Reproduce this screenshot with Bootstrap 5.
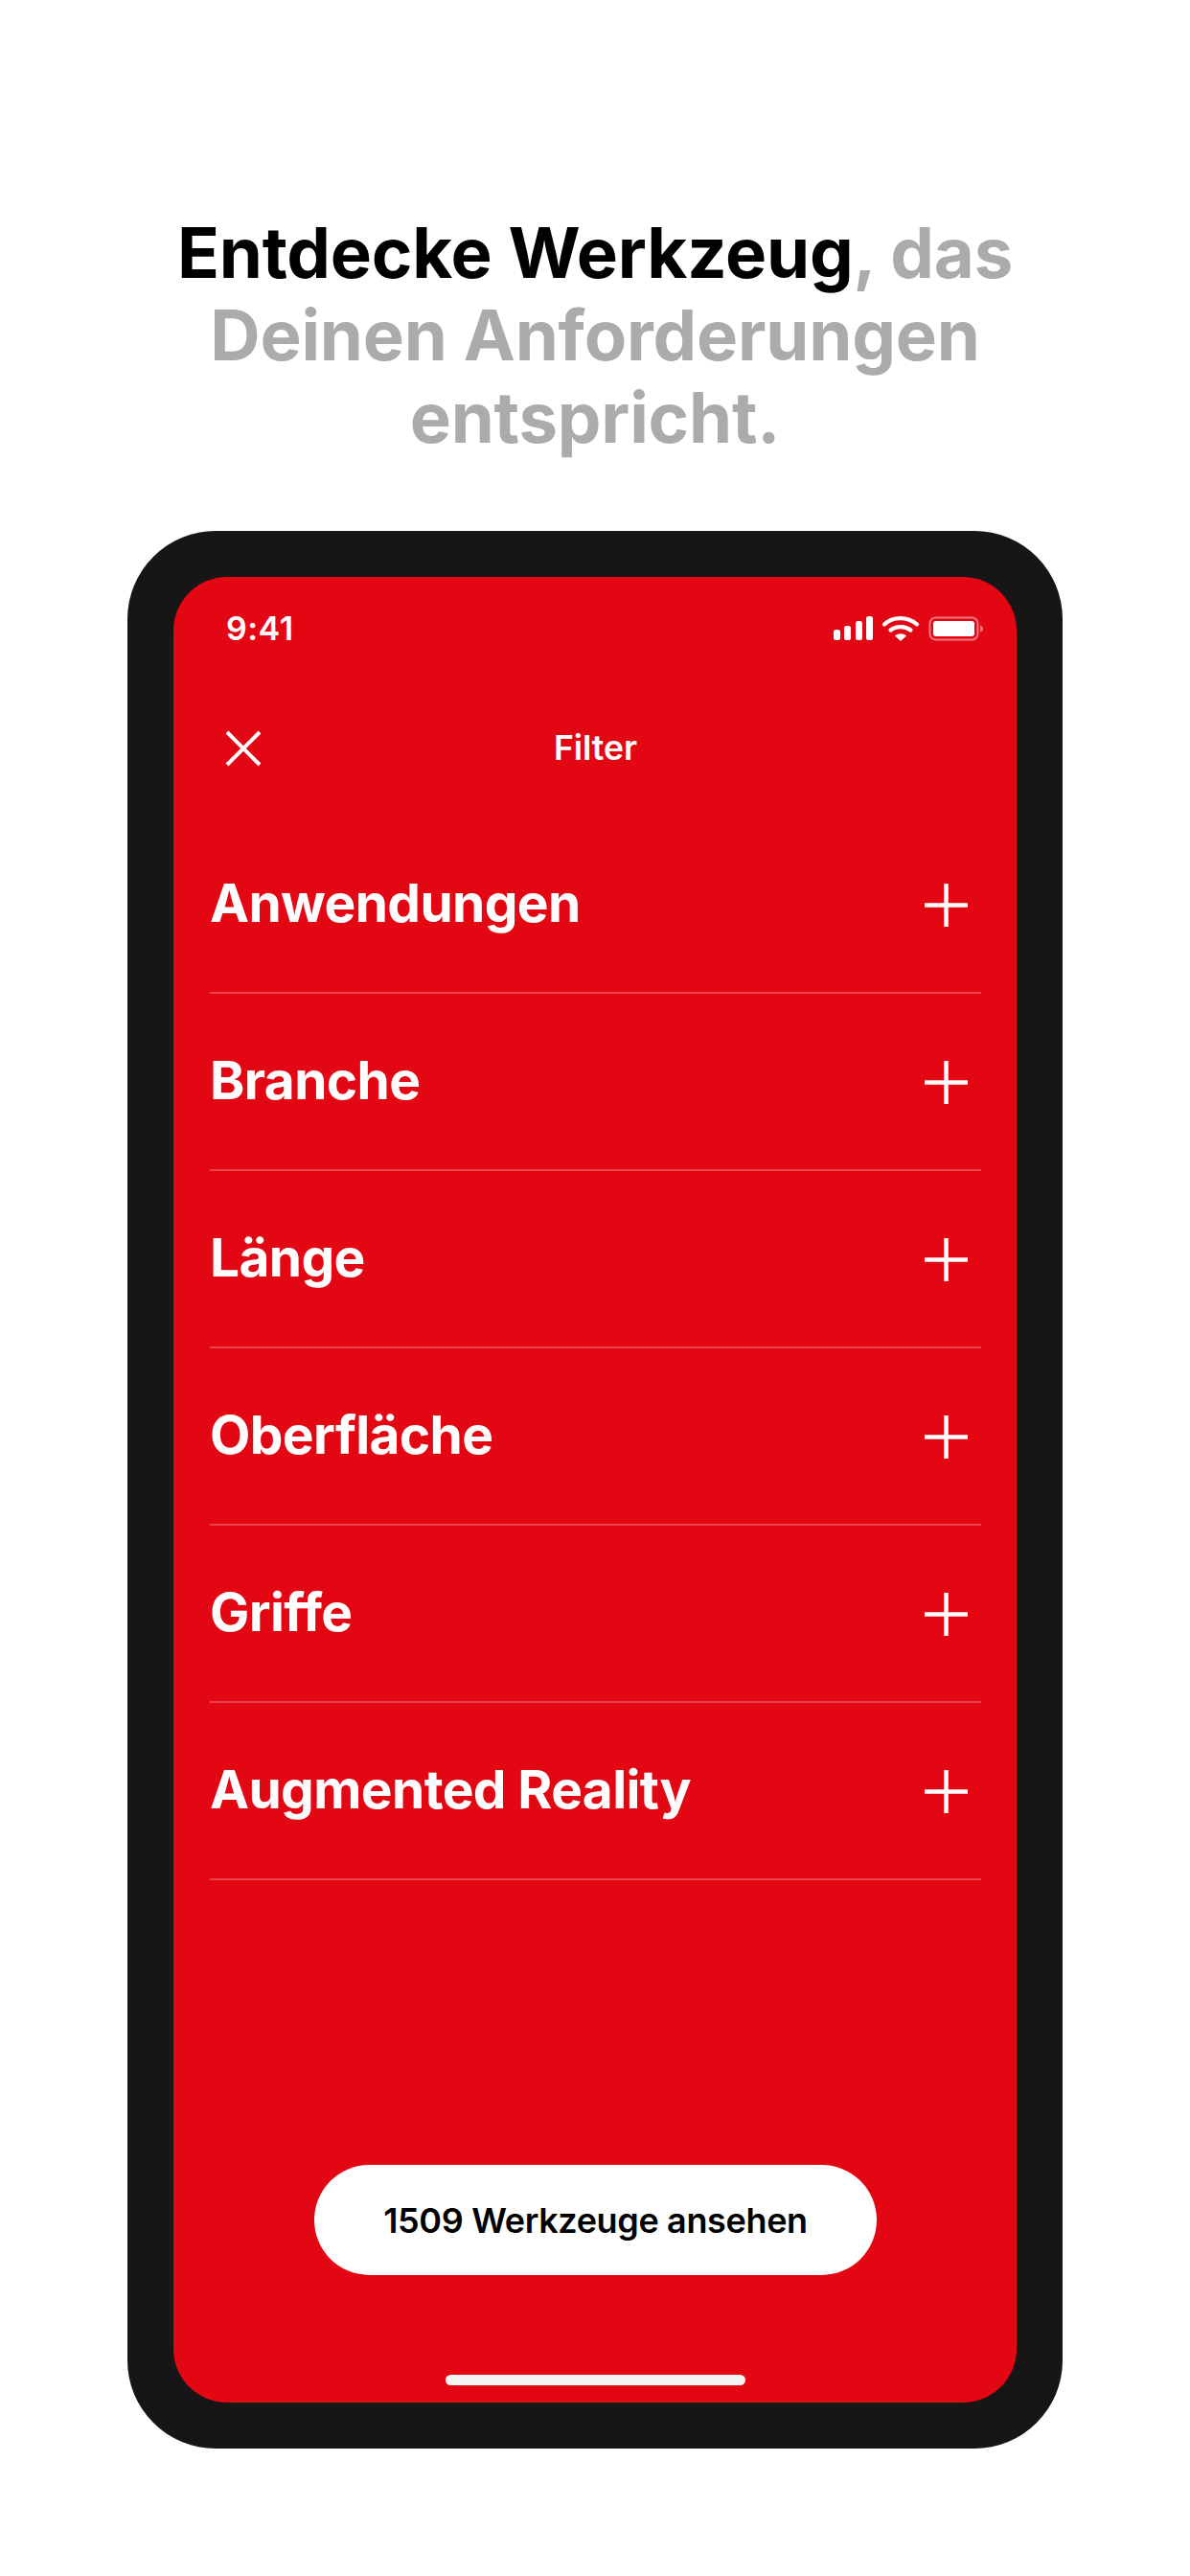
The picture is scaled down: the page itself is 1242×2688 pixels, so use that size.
<!DOCTYPE html>
<html lang="de">
<head>
  <meta charset="UTF-8">
  <title>Filter</title>
  <meta name="viewport" content="width=device-width, initial-scale=1">
  <link href="https://cdn.jsdelivr.net/npm/bootstrap@5.3.0/dist/css/bootstrap.min.css" rel="stylesheet">
  <style>
    body { background-color: #fff; font-family: Inter, "Liberation Sans", sans-serif; }
    .page-wrap { width: 1242px; height: 2688px; padding-top: 221px; }
    .promo-title {
      font-family: Inter, "Liberation Sans", sans-serif;
      font-size: 72.5px; line-height: 86px; font-weight: 700;
      color: #ababab; text-align: center; margin: 0 0 75px; letter-spacing: -.2px;
    }
    .promo-title b { color: #000; font-weight: 700; }
    .phone-frame { width: 976px; height: 2001px; margin: 0 auto; padding: 48px; background: #161616; border-radius: 92px; }
    .phone-screen { height: 100%; background: #e30613; border-radius: 56px; color: #fff; padding: 0 37px 18px 38px; }
    .status-row { height: 58px; margin: 25px -3px 0 0; padding: 0 0 0 17px; }
    .status-time { font-size: 34px; font-weight: 600; line-height: 58px; letter-spacing: .5px; }
    .top-row { height: 70px; margin-top: 61px; position: relative; }
    .top-title { font-size: 35.5px; font-weight: 600; }
    .close-btn { position: absolute; left: 16px; top: 16px; line-height: 0; }
    .filter-list { margin-top: 36px; }
    .filter-row { height: 185px; padding: 2px 14px 0 0; border-bottom: 2px solid rgba(255,255,255,.25); }
    .filter-name { font-size: 55px; font-weight: 650; letter-spacing: -.6px; line-height: 1; margin-top: -5px; }
    .see-btn {
      width: 587px; height: 115px; border-radius: 58px; background: #fff; color: #000; border: 0;
      font-size: 36px; font-weight: 600; letter-spacing: -.35px; padding: 0;
    }
    .home-bar { width: 313px; height: 11px; background: #f4f4f4; border-radius: 6px; margin-top: 104px; }
  </style>
</head>
<body class="m-0">
  <div class="page-wrap">
    <h1 class="promo-title"><b>Entdecke Werkzeug</b>, das<br>Deinen Anforderungen<br>entspricht.</h1>

    <div class="phone-frame">
      <div class="phone-screen d-flex flex-column">
        <div class="status-row d-flex justify-content-between align-items-center">
          <span class="status-time">9:41</span>
          <svg width="158" height="28" viewBox="0 0 158 28" fill="#fff">
            <rect x="1" y="15" width="7" height="11" rx="2.5"/>
            <rect x="12" y="11" width="7" height="15" rx="2.5"/>
            <rect x="24" y="6" width="7" height="20" rx="2.5"/>
            <rect x="35" y="1" width="7" height="25" rx="2.5"/>
            <path d="M54 9.5C63 1 78 1 88 9.5" fill="none" stroke="#fff" stroke-width="4.2" stroke-linecap="round"/>
            <path d="M60.5 15.5C66 11 75.500 11 81.500 15.500" fill="none" stroke="#fff" stroke-width="4.200" stroke-linecap="round"/>
            <path d="M65 21.500L71 27l6-5.500C73.500 18.500 68.500 18.500 65 21.500z"/>
            <rect x="101.500" y="2.500" width="50" height="23" rx="6" fill="none" stroke="#fff" stroke-opacity=".45" stroke-width="2"/>
            <rect x="105" y="6" width="43" height="16" rx="3"/>
            <path d="M154 10.500c2 .5 3 2 3 3.500s-1 3-3 3.500z" fill-opacity=".5"/>
          </svg>
        </div>

        <div class="top-row d-flex justify-content-center align-items-center">
          <span class="close-btn">
            <svg width="38" height="38" viewBox="0 0 38 38" stroke="#fff" stroke-width="4" fill="none"><path d="M2 2l34 34M36 2L2 36"/></svg>
          </span>
          <span class="top-title">Filter</span>
        </div>

        <div class="filter-list" id="filterList"></div>

        <div class="flex-grow-1"></div>
        <div class="d-flex flex-column align-items-center">
          <button type="button" class="btn see-btn">1509 Werkzeuge ansehen</button>
          <div class="home-bar"></div>
        </div>
      </div>
    </div>
  </div>

  <script src="https://cdn.jsdelivr.net/npm/bootstrap@5.3.0/dist/js/bootstrap.bundle.min.js"></script>
  <script>
    // Filterzeilen
    const names = ['Anwendungen', 'Branche', 'Länge', 'Oberfläche', 'Griffe', 'Augmented Reality'];
    document.getElementById('filterList').innerHTML = names.map(n => `
      <div class="filter-row d-flex justify-content-between align-items-center">
        <span class="filter-name">${n}</span>
        <svg width="45" height="45" viewBox="0 0 45 45" stroke="#fff" stroke-width="4.500" fill="none"><path d="M22.500 0v45M0 22.500h45"/></svg>
      </div>`).join('');
  </script>
</body>
</html>
